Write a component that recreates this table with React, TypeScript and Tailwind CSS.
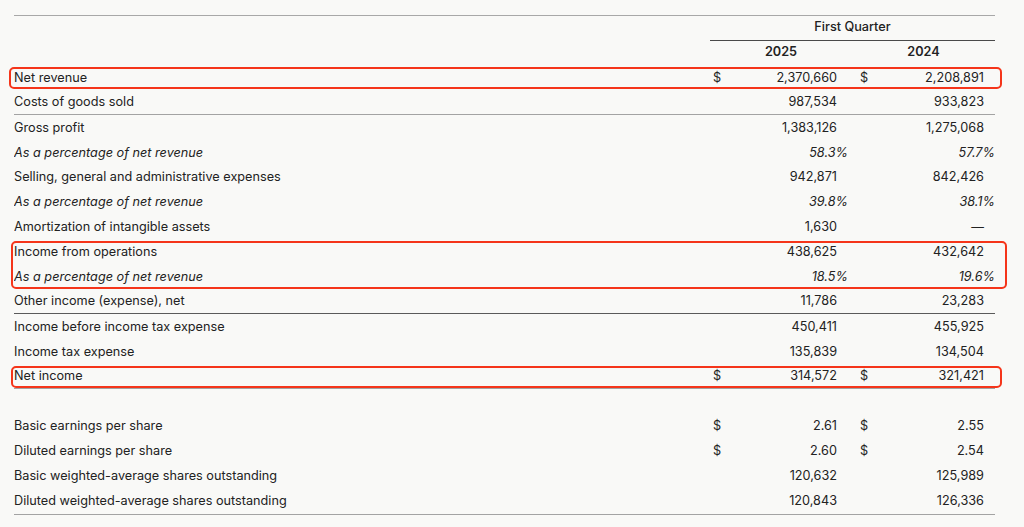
import React from 'react';

type Row = {
  label: string;
  a?: string;
  b?: string;
  dollar?: boolean;
  pct?: boolean;
  line?: 'dark' | 'light';
};

const FONT = "font-['Inter','Liberation_Sans',sans-serif]";

const StatementRow: React.FC<{ row: Row }> = ({ row }) => {
  const lineClass =
    row.line === 'dark'
      ? 'border-b border-[#5a5a5a]'
      : row.line === 'light'
      ? 'border-b border-[#a3a3a3]'
      : '';
  return (
    <div className={`flex h-[24.9px] items-center ${lineClass} ${row.pct ? 'italic' : ''}`}>
      <div className="flex-1 truncate">{row.label}</div>
      <div className={`flex w-[142px] items-center ${row.pct ? 'pr-[4px]' : 'pr-[15px]'}`}>
        <span className="pl-[3px]">{row.dollar ? '$' : ''}</span>
        <span className="ml-auto">{row.a}</span>
      </div>
      <div className={`flex w-[143px] items-center ${row.pct ? 'pr-0' : 'pr-[11px]'}`}>
        <span className="pl-[8px]">{row.dollar ? '$' : ''}</span>
        <span className="ml-auto">{row.b}</span>
      </div>
    </div>
  );
};

const Highlight: React.FC<{ className: string; children: React.ReactNode }> = ({ className, children }) => (
  <div className="relative">
    {children}
    <div className={`pointer-events-none absolute rounded-[5px] border-2 border-[#f5351a] ${className}`} />
  </div>
);

export default function App() {
  return (
    <div className={`min-h-screen bg-[#f9f9f7] text-[12.7px] text-[#222222] ${FONT}`}>
      <div className="ml-[14px] w-[981px] pt-[15px]">
        <div className="border-t border-[#a8a8a8]">
          {/* Header */}
          <div className="flex h-[25px]">
            <div className="flex-1" />
            <div className="w-[285px] border-b border-[#4a4a4a] pt-[3px] text-center font-medium leading-[16px]">
              First Quarter
            </div>
          </div>
          <div className="flex h-[24px] font-semibold leading-[16px]">
            <div className="flex-1" />
            <div className="w-[142px] pt-[3px] text-center">2025</div>
            <div className="w-[143px] pt-[3px] text-center">2024</div>
          </div>

          <Highlight className="-left-[5px] -right-[7px] top-[2px] bottom-[1px]">
            <StatementRow row={{ label: 'Net revenue', a: '2,370,660', b: '2,208,891', dollar: true }} />
          </Highlight>
          <StatementRow row={{ label: 'Costs of goods sold', a: '987,534', b: '933,823', line: 'light' }} />
          <StatementRow row={{ label: 'Gross profit', a: '1,383,126', b: '1,275,068' }} />
          <StatementRow row={{ label: 'As a percentage of net revenue', a: '58.3%', b: '57.7%', pct: true }} />
          <StatementRow row={{ label: 'Selling, general and administrative expenses', a: '942,871', b: '842,426' }} />
          <StatementRow row={{ label: 'As a percentage of net revenue', a: '39.8%', b: '38.1%', pct: true }} />
          <StatementRow row={{ label: 'Amortization of intangible assets', a: '1,630', b: '—' }} />
          <Highlight className="-left-[3px] -right-[12px] top-[1.5px] bottom-0">
            <StatementRow row={{ label: 'Income from operations', a: '438,625', b: '432,642' }} />
            <StatementRow row={{ label: 'As a percentage of net revenue', a: '18.5%', b: '19.6%', pct: true }} />
          </Highlight>
          <StatementRow row={{ label: 'Other income (expense), net', a: '11,786', b: '23,283', line: 'dark' }} />
          <StatementRow row={{ label: 'Income before income tax expense', a: '450,411', b: '455,925' }} />
          <StatementRow row={{ label: 'Income tax expense', a: '135,839', b: '134,504' }} />
          <Highlight className="-left-[3px] -right-[7px] top-[2.5px] bottom-[0.5px]">
            <StatementRow row={{ label: 'Net income', a: '314,572', b: '321,421', dollar: true, line: 'light' }} />
          </Highlight>
          <div className="h-[24.9px]" />
          <div className="border-b border-[#a3a3a3] pb-[1px]">
            <StatementRow row={{ label: 'Basic earnings per share', a: '2.61', b: '2.55', dollar: true }} />
            <StatementRow row={{ label: 'Diluted earnings per share', a: '2.60', b: '2.54', dollar: true }} />
            <StatementRow row={{ label: 'Basic weighted-average shares outstanding', a: '120,632', b: '125,989' }} />
            <StatementRow row={{ label: 'Diluted weighted-average shares outstanding', a: '120,843', b: '126,336' }} />
          </div>
        </div>
      </div>
    </div>
  );
}
